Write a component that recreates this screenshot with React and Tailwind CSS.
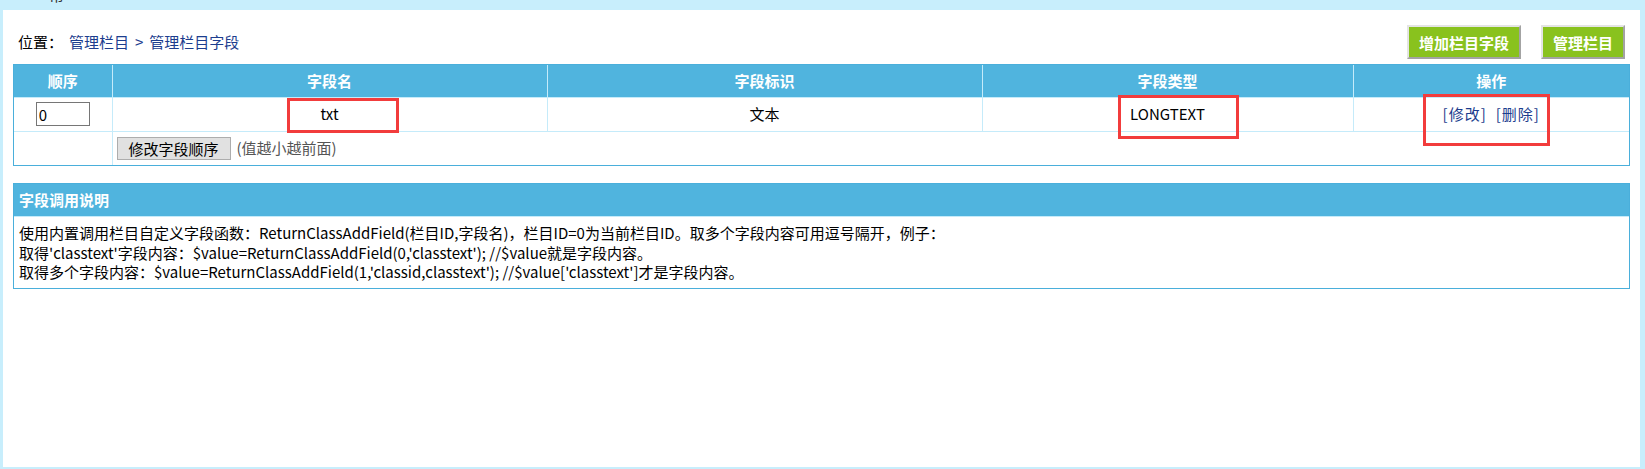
import React from "react";

const font = { fontFamily: '"Noto Sans CJK SC", "Noto Sans", sans-serif' };

const columns = [
  { name: "顺序", w: "w-[98px]" },
  { name: "字段名", w: "w-[435px]" },
  { name: "字段标识", w: "w-[435px]" },
  { name: "字段类型", w: "w-[371px]" },
  { name: "操作", w: "w-[276px]" },
];

const GreenButton = ({ children, w }) => (
  <button
    className={`${w} h-[34px] bg-[#89c21e] text-white font-bold text-[15px] leading-none border-2 border-t-[#e4e4e4] border-l-[#e4e4e4] border-b-[#a3a3a3] border-r-[#a3a3a3]`}
  >
    {children}
  </button>
);

function App() {
  return (
    <div
      className="w-[1645px] h-[469px] bg-[#c8eefc] pl-[3px] pr-[5px] flex flex-col overflow-hidden text-[15px] text-black"
      style={font}
    >
      {/* cut-off text at the very top */}
      <div className="h-[10px] overflow-hidden shrink-0">
        <div className="pl-[46px] -mt-[13px] text-[15px] leading-[16px] text-[#333]">帮</div>
      </div>

      <div className="relative bg-white h-[457px] px-[10px] pt-[15px]">
        {/* top row */}
        <div className="h-[34px] flex items-center justify-between pl-[5px] pr-[5px]">
          <div className="leading-[20px] flex items-center">
            <span>位置：</span>
            <span className="ml-[6px] text-[#1c3d8e]">管理栏目</span>
            <span className="mx-[6px] text-[#1c3d8e]">&gt;</span>
            <span className="text-[#1c3d8e]">管理栏目字段</span>
          </div>
          <div className="flex gap-[20px]">
            <GreenButton w="w-[114px]">增加栏目字段</GreenButton>
            <GreenButton w="w-[84px]">管理栏目</GreenButton>
          </div>
        </div>

        {/* field table */}
        <div className="mt-[5px] border border-[#4aafdb]">
          <table className="w-full table-fixed border-collapse">
            <thead>
              <tr className="h-[32px]">
                {columns.map((c, i) => (
                  <th
                    key={c.name}
                    className={`${c.w} bg-[#50b4de] text-white font-bold text-[15px] text-center ${
                      i > 0 ? "border-l border-[#c5ebfa]" : ""
                    }`}
                  >
                    {c.name}
                  </th>
                ))}
              </tr>
            </thead>
            <tbody>
              <tr className="h-[34px] text-center">
                <td className="border-t border-[#c5ebfa]">
                  <input
                    defaultValue="0"
                    className="w-[54px] h-[24px] border border-[#767676] px-[2px] text-[15px] text-black outline-none"
                  />
                </td>
                <td className="border-t border-l border-[#c5ebfa]">txt</td>
                <td className="border-t border-l border-[#c5ebfa]">文本</td>
                <td className="border-t border-l border-[#c5ebfa]">LONGTEXT</td>
                <td className="border-t border-l border-[#c5ebfa] text-[#1c3d8e]">
                  <a href="#" className="tracking-[1px]">[修改]</a>
                  <a href="#" className="ml-[9px] tracking-[1px]">[删除]</a>
                </td>
              </tr>
              <tr className="h-[34px]">
                <td className="border-t border-[#c5ebfa]"></td>
                <td colSpan={4} className="border-t border-l border-[#c5ebfa] pl-[4px]">
                  <div className="flex items-center gap-[6px]">
                    <button className="w-[114px] h-[23px] bg-[#e1e1e1] border border-[#adadad] text-[15px] leading-none text-black">
                      修改字段顺序
                    </button>
                    <span className="text-[#555]">(值越小越前面)</span>
                  </div>
                </td>
              </tr>
            </tbody>
          </table>
        </div>

        {/* usage notes */}
        <div className="mt-[17px] border border-[#4aafdb]">
          <div className="h-[32px] bg-[#50b4de] text-white font-bold flex items-center pl-[5px]">
            字段调用说明
          </div>
          <div className="border-t border-[#c5ebfa] pl-[5px] pt-[6px] pb-[6px] leading-[19.5px]">
            <p>使用内置调用栏目自定义字段函数：ReturnClassAddField(栏目ID,字段名)，栏目ID=0为当前栏目ID。取多个字段内容可用逗号隔开，例子：</p>
            <p>取得'classtext'字段内容：$value=ReturnClassAddField(0,'classtext'); //$value就是字段内容。</p>
            <p>取得多个字段内容：$value=ReturnClassAddField(1,'classid,classtext'); //$value['classtext']才是字段内容。</p>
          </div>
        </div>

        {/* red annotation boxes */}
        <div className="absolute left-[284px] top-[88px] w-[112px] h-[35px] border-[3px] border-[#f23c3c]"></div>
        <div className="absolute left-[1115px] top-[85px] w-[121px] h-[44px] border-[3px] border-[#f23c3c]"></div>
        <div className="absolute left-[1420px] top-[84px] w-[127px] h-[52px] border-[3px] border-[#f23c3c]"></div>
      </div>
    </div>
  );
}

export default App;
